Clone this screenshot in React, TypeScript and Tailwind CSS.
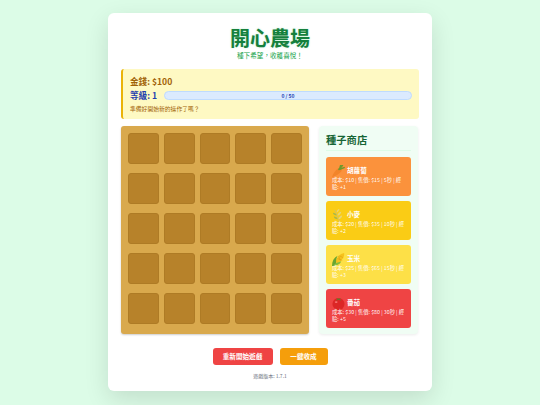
const FONT = "font-['Noto_Sans_CJK_TC','Noto_Sans',sans-serif]";

const Carrot = () => (
  <svg viewBox="1 1 15 15" className="w-[13px] h-[13px]">
    <path d="M1 15 C2 11 5 7 8 5 C11 4 13 6 12 8 C9 12 5 14 1 15Z" fill="#f2842a" />
    <path d="M9 6 L13 1.5 M10 6 L15 4 M10 5 L11 1.5" stroke="#6f9a2c" strokeWidth="1.8" strokeLinecap="round" />
  </svg>
);

const Wheat = () => (
  <svg viewBox="1 1 14 14" className="w-[13px] h-[13px]">
    <path d="M9 15 C8 11 7 7 4 2" stroke="#d8c25a" strokeWidth="1.2" fill="none" />
    <path d="M6 5 C8 4 9 2 9 1 C7 1 6 3 6 5Z M7 8 C9 8 11 6 11 4 C9 4 7 6 7 8Z M8 12 C10 12 12 10 12 8 C10 8 8 10 8 12Z" fill="#e8d574" />
    <path d="M6 8 C4 8 2 7 2 5 C4 5 6 6 6 8Z M7 12 C5 12 3 11 3 9 C5 9 7 10 7 12Z" fill="#a9b84a" />
  </svg>
);

const Corn = () => (
  <svg viewBox="1 1 14 14" className="w-[13px] h-[13px]">
    <path d="M5 11 C5 7 9 2 14 1 C15 5 11 10 7 12Z" fill="#f6c21c" />
    <path d="M7 7 L12 9 M9 4 L13 6 M8 4 L10 9" stroke="#dc9a12" strokeWidth="0.6" />
    <path d="M1 15 C1 10 3 6 7 4 C5 8 5 11 6 13 C4 14 3 15 1 15Z" fill="#6aa530" />
    <path d="M2 15 C6 15 10 13 11 10 C8 11 6 12 5 12Z" fill="#86bc3c" />
  </svg>
);

const Tomato = () => (
  <svg viewBox="1 2 14 14" className="w-[13px] h-[13px]">
    <circle cx="8" cy="9.5" r="6.5" fill="#dc2626" />
    <ellipse cx="5.5" cy="7.5" rx="1.5" ry="1" fill="#f87171" />
    <path d="M8 4 L5 3 L7 4.5 L5 6 L8 5 L11 6 L9 4.5 L11 3Z" fill="#4d8a2a" />
  </svg>
);

const seeds = [
  { name: "胡蘿蔔", info: "成本: $10 | 售價: $15 | 5秒 | 經驗: +1", bg: "bg-[#fb923c]", Icon: Carrot },
  { name: "小麥", info: "成本: $20 | 售價: $35 | 10秒 | 經驗: +2", bg: "bg-[#facc15]", Icon: Wheat },
  { name: "玉米", info: "成本: $25 | 售價: $65 | 15秒 | 經驗: +3", bg: "bg-[#fde047]", Icon: Corn },
  { name: "番茄", info: "成本: $30 | 售價: $80 | 30秒 | 經驗: +5", bg: "bg-[#ef4444]", Icon: Tomato },
];

export default function App() {
  return (
    <div className={`${FONT} w-[540px] h-[405px] overflow-hidden bg-[#dcfce7] pt-[13px] flex justify-center`}>
      <div className="w-[324px] h-[378px] bg-white rounded-[6px] shadow-[0_8px_24px_rgba(0,0,0,0.12)] px-[13px] pt-[13px] flex flex-col">
        <div className="text-center">
          <h1 className="text-[20px] leading-[23px] font-bold text-[#15803d] [text-shadow:0_0_2px_rgba(34,197,94,0.3)]">開心農場</h1>
          <p className="text-[6.6px] leading-[10px] mt-[0.5px] text-[#16a34a]">種下希望，收穫喜悅！</p>
        </div>

        <div className="mt-[9.5px] h-[50px] bg-[#fef9c3] border-l-2 border-[#eab308] rounded-[3px] px-[7px] pt-[6px]">
          <div className="text-[8.6px] leading-[13px] font-bold text-[#a16207]">金錢: $100</div>
          <div className="flex items-center gap-[7px] mt-[1px]">
            <span className="text-[8.6px] leading-[13px] font-bold text-[#1e40af] whitespace-nowrap">等級: 1</span>
            <div className="flex-1 h-[9px] bg-[#dbeafe] border border-[#bfdbfe] rounded-full flex items-center justify-center text-[5px] font-bold text-[#1e40af]">0 / 50</div>
          </div>
          <div className="text-[5.8px] leading-[9px] mt-[2px] text-[#a16207]">準備好開始新的操作了嗎？</div>
        </div>

        <div className="mt-[7px] flex gap-[10px]">
          <div className="w-[188px] h-[208px] bg-[#d9a94d] rounded-[3px] shadow-[0_1px_2px_rgba(0,0,0,0.2)] p-[7px] grid grid-cols-5 auto-rows-[31px] gap-x-[5px] gap-y-[9px]">
            {Array.from({ length: 25 }).map((_, i) => (
              <div key={i} className="bg-[#b7822a] border border-[#ae7b25] rounded-[3px]" />
            ))}
          </div>

          <div className="w-[99px] h-[208px] bg-[#f0fdf4] rounded-[4px] shadow-[0_1px_3px_rgba(0,0,0,0.08)] px-[7px] pt-[6px]">
            <h2 className="text-[10.3px] leading-[15px] font-bold text-[#166534] pb-[3px] border-b border-[#dcfce7]">種子商店</h2>
            <div className="mt-[6px] flex flex-col gap-[5px]">
              {seeds.map((s) => (
                <div key={s.name} className={`${s.bg} h-[39px] rounded-[3px] pl-[6px] pr-[5px] pt-[8px] text-white`}>
                  <div className="flex items-center h-[12px]">
                    <s.Icon />
                    <span className="text-[6.6px] font-bold pl-[2px]">{s.name}</span>
                  </div>
                  <div className="text-[5.3px] leading-[7px] text-white/95">{s.info}</div>
                </div>
              ))}
            </div>
          </div>
        </div>

        <div className="mt-[14px] flex justify-center gap-[7px]">
          <button className="h-[17px] w-[60px] rounded-[3px] bg-[#ef4444] text-white text-[6.6px] font-bold">重新開始遊戲</button>
          <button className="h-[17px] w-[48px] rounded-[3px] bg-[#f59e0b] text-white text-[6.6px] font-bold">一鍵收成</button>
        </div>
        <p className="mt-[7px] text-center text-[5px] leading-[8px] text-[#6b7280]">遊戲版本: 1.7.1</p>
      </div>
    </div>
  );
}
